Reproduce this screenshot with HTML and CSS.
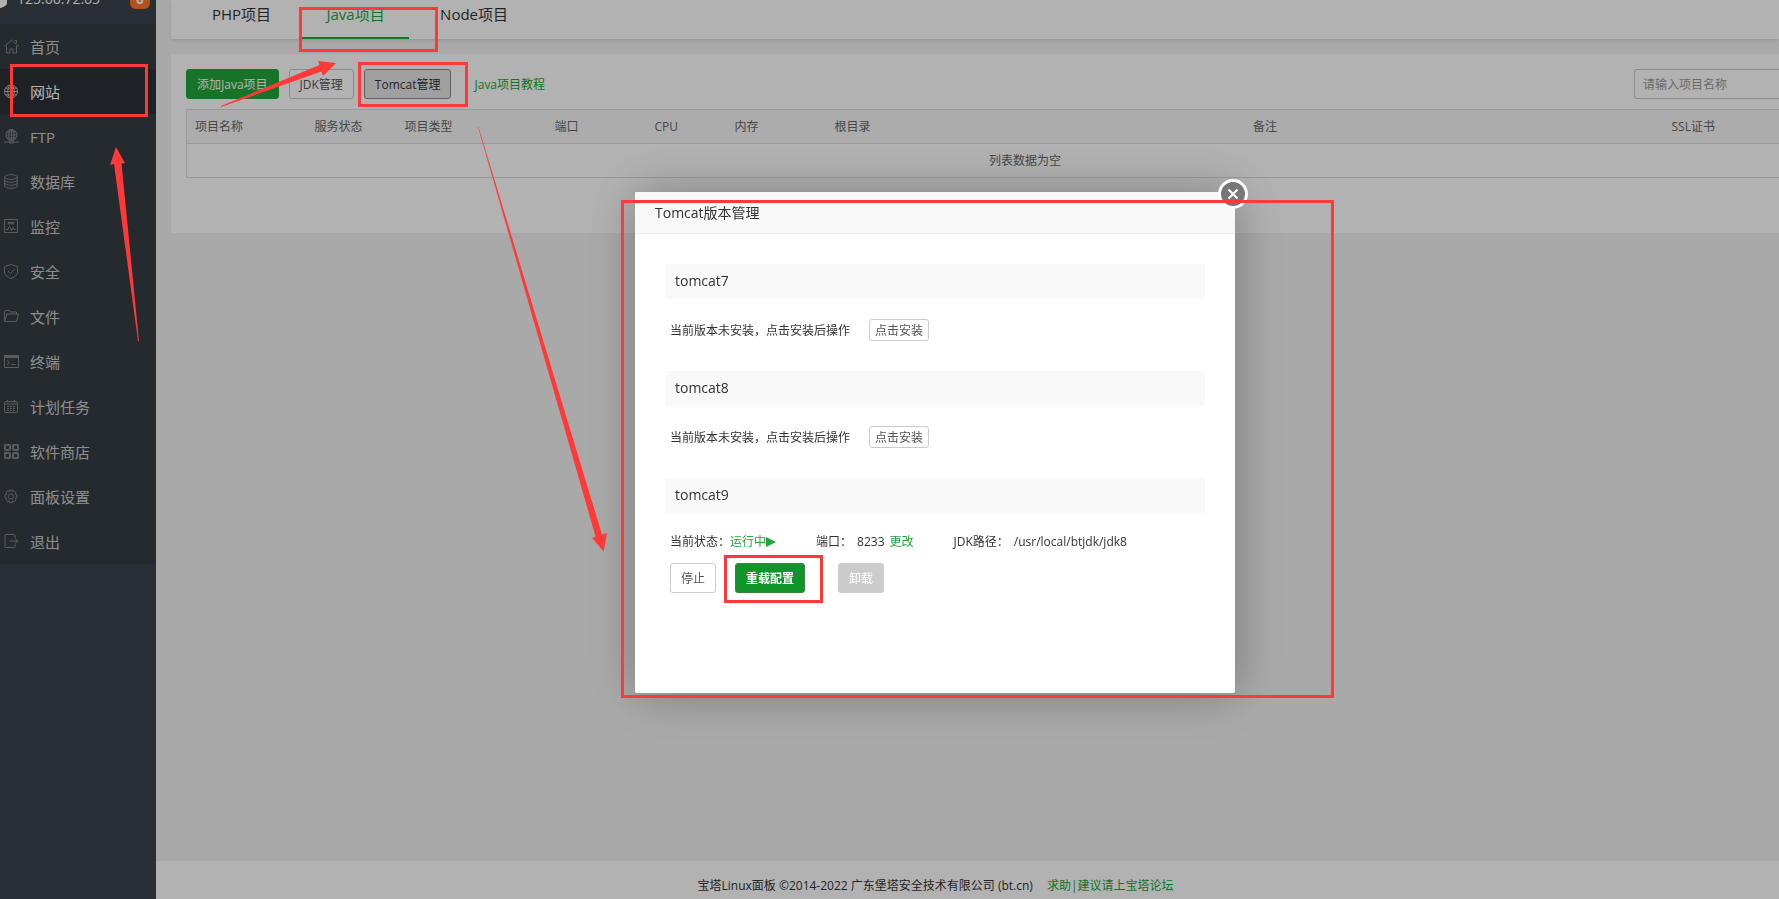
FILE: index.html
```html
<!DOCTYPE html>
<html lang="zh-CN">
<head>
<meta charset="utf-8">
<title>宝塔Linux面板</title>
<link rel="stylesheet" href="styles.css">
</head>
<body>
<div class="app">
  <aside class="sidebar">
    <div class="host">
      <svg class="host-logo" width="14" height="16" viewBox="0 0 14 16"><path d="M0 0H14V11Q14 13 12 14L8 16H6L0 13Z" fill="#fff"/></svg>
      <span class="host-ip">125.66.72.65</span>
      <span class="host-badge">0</span>
    </div>
    <nav class="menu">
      <a class="menu-item" href="#"><svg class="icon" viewBox="0 0 15 15"><path d="M.5 7.500 7.500 1l7 6.500M2.500 7v7h3.500v-4h3v4h3.500V7M10.500 1.500h2v2.500"/></svg>首页</a>
      <a class="menu-item active" href="#"><svg class="icon" viewBox="0 0 15 15"><circle cx="7" cy="7.500" r="6.500"/><ellipse cx="7" cy="7.500" rx="3.200" ry="6.500"/><path d="M7 1v13M.5 7.500h13M1.500 4.200h11M1.500 10.800h11"/></svg>网站</a>
      <a class="menu-item" href="#"><svg class="icon" viewBox="0 0 15 15"><circle cx="7.500" cy="6" r="5.500"/><ellipse cx="7.500" cy="6" rx="2.700" ry="5.500"/><path d="M7.500.5v11M2 6h11M3 3h9M3 9h9M0 13h15M5.500 12v2h4v-2"/></svg>FTP</a>
      <a class="menu-item" href="#"><svg class="icon" viewBox="0 0 15 15"><ellipse cx="7" cy="3" rx="6.300" ry="2.300"/><path d="M.7 3v9c0 3 12.600 3 12.600 0V3M.7 6c0 3 12.600 3 12.600 0M.7 9c0 3 12.600 3 12.600 0"/></svg>数据库</a>
      <a class="menu-item" href="#"><svg class="icon" viewBox="0 0 15 15"><path d="M.5.5h13v13H.500zM4 3.500h6M4 4.800h6M2 10.500h2l1.500-3 2 4 1.500-3 1 2h2"/></svg>监控</a>
      <a class="menu-item" href="#"><svg class="icon" viewBox="0 0 15 15"><path d="M7 .5 13.500 2.500V8c0 3-3 5-6.500 6.500C3.500 13 .5 11 .5 8V2.500zM4 7l2.500 2.500L10.500 5.500"/></svg>安全</a>
      <a class="menu-item" href="#"><svg class="icon" viewBox="0 0 15 15"><path d="M.5 12.500v-10q0-1 1-1h3.500l1.500 1.500h6v2M.5 12.500 3 5h11.500l-2 7.500z"/></svg>文件</a>
      <a class="menu-item" href="#"><svg class="icon" viewBox="0 0 15 15"><path d="M0 2.500h15" stroke-width="3"/><path d="M.5 2v11.500h14V2M3 6.500 5.500 8.500 3 10.500M7.500 10.500h4"/></svg>终端</a>
      <a class="menu-item" href="#"><svg class="icon" viewBox="0 0 15 15"><path d="M1.500 2.500h11q1 0 1 1v9q0 1-1 1h-11q-1 0-1-1v-9q0-1 1-1zM.5 5h13M3.500 1v2.500M10.500 1v2.500"/><path d="M3 7.500h8.500M3 9.500h8.500M3 11.500h8.500" stroke-dasharray="2 1"/></svg>计划任务</a>
      <a class="menu-item" href="#"><svg class="icon bold" viewBox="0 0 15 15"><rect x=".8" y=".8" width="5.200" height="5.200" rx="1.200"/><rect x="9" y=".8" width="5.200" height="5.200" rx="1.200"/><rect x=".8" y="9" width="5.200" height="5.200" rx="1.200"/><rect x="9" y="9" width="5.200" height="5.200" rx="1.200"/></svg>软件商店</a>
      <a class="menu-item" href="#"><svg class="icon" viewBox="0 0 15 15"><circle cx="7" cy="7.500" r="2.600"/><path d="M5.700 1h2.600l.4 1.700 1.500-.9 1.900 1.900-.9 1.500 1.800.9v2.700l-1.800.5.900 1.500-1.900 1.900-1.500-.9-.4 1.900H5.700l-.4-1.900-1.500.9-1.900-1.900.9-1.500L1 8.800V6.100l1.800-.9-.9-1.500 1.900-1.900 1.500.9z"/></svg>面板设置</a>
      <a class="menu-item" href="#"><svg class="icon" viewBox="0 0 15 15"><path d="M11 4V1.500q0-1-1-1H2q-1 0-1 1v11q0 1 1 1h8q1 0 1-1V10M5.500 7h8.500M11 4.500 14 7l-3 2.500"/></svg>退出</a>
    </nav>
  </aside>

  <div class="page">
    <main class="main">
      <nav class="tabs">
        <a class="tab" href="#">PHP项目</a>
        <a class="tab active" href="#">Java项目</a>
        <a class="tab" href="#">Node项目</a>
      </nav>
      <section class="panel">
        <div class="toolbar">
          <button class="btn primary" type="button">添加Java项目</button>
          <button class="btn" type="button">JDK管理</button>
          <button class="btn pressed" type="button">Tomcat管理</button>
          <a class="link help" href="#">Java项目教程</a>
          <input class="search" type="text" aria-label="请输入项目名称" placeholder="请输入项目名称">
        </div>
        <table class="projects">
          <colgroup>
            <col class="w-name"><col class="w-status"><col class="w-type"><col class="w-port"><col class="w-cpu"><col class="w-mem"><col><col><col class="w-ssl">
          </colgroup>
          <thead>
            <tr><th>项目名称</th><th>服务状态</th><th>项目类型</th><th>端口</th><th>CPU</th><th>内存</th><th>根目录</th><th>备注</th><th>SSL证书</th></tr>
          </thead>
          <tbody>
            <tr><td class="empty" colspan="9">列表数据为空</td></tr>
          </tbody>
        </table>
      </section>
    </main>
    <footer class="footer">宝塔Linux面板 ©2014-2022 广东堡塔安全技术有限公司 (bt.cn)<a class="link" href="#">求助|建议请上宝塔论坛</a></footer>
  </div>
</div>

<div class="overlay">
  <div class="dialog" role="dialog" aria-labelledby="dialog-title">
    <h2 class="dialog-title" id="dialog-title">Tomcat版本管理</h2>
    <button class="close" type="button" aria-label="关闭"><svg width="12" height="12" viewBox="0 0 12 12"><path d="M1.500 1.500l9 9M10.500 1.500l-9 9" stroke="#fff" stroke-width="2"/></svg></button>
    <div class="dialog-body">
      <section class="version">
        <h3 class="version-name">tomcat7</h3>
        <div class="install"><span>当前版本未安装，点击安装后操作</span><button class="btn small" type="button">点击安装</button></div>
      </section>
      <section class="version">
        <h3 class="version-name">tomcat8</h3>
        <div class="install"><span>当前版本未安装，点击安装后操作</span><button class="btn small" type="button">点击安装</button></div>
      </section>
      <section class="version">
        <h3 class="version-name">tomcat9</h3>
        <div class="status">
          <span class="state">当前状态：<a class="link running" href="#">运行中<svg width="10" height="10" viewBox="0 0 10 10"><path d="M0 0 10 5 0 10z" fill="#20a53a"/></svg></a></span>
          <span class="port"><span>端口：</span><span>8233</span><a class="link" href="#">更改</a></span>
          <span class="jdk"><span>JDK路径：</span><span>/usr/local/btjdk/jdk8</span></span>
        </div>
        <div class="actions">
          <button class="btn" type="button">停止</button>
          <button class="btn reload" type="button">重载配置</button>
          <button class="btn uninstall" type="button" disabled>卸载</button>
        </div>
      </section>
    </div>
  </div>
</div>

<svg class="marks" width="1779" height="899" viewBox="0 0 1779 899" aria-hidden="true">
  <g fill="none" stroke="#ff3838" stroke-width="3">
    <rect x="11.500" y="65.500" width="135" height="50"/>
    <rect x="300.500" y="8.500" width="136" height="42"/>
    <rect x="359.500" y="63.500" width="107" height="42"/>
    <rect x="622.500" y="201.500" width="710" height="495"/>
    <rect x="725.500" y="556.500" width="96" height="45"/>
  </g>
  <g fill="#ff3838">
    <path d="M116 147 125 163 121.500 163.500 139 341H138L114 164 110 165z"/>
    <path d="M336 63 323 76 321.500 71.500 221 107V106L319.500 65 318 61z"/>
    <path d="M603.700 551.500 592 538 595.500 536.500 478 127H478.500L602 534.500 607 533z"/>
  </g>
</svg>
</body>
</html>
```

FILE: styles.css
```css
* {
  box-sizing: border-box;
}

body {
  margin: 0;
  overflow: hidden;
  color: #333;
  font: 12px/18px "Open Sans", "Noto Sans CJK SC", sans-serif;
}

button,
input {
  font: inherit;
}

a {
  text-decoration: none;
}

.link {
  color: #20a53a;
}

.app {
  display: flex;
  min-height: 100vh;
  background: #f3f3f3;
}

/* Sidebar */
.sidebar {
  flex: 0 0 156px;
  background: #3c444d;
}

.host {
  display: flex;
  align-items: flex-start;
  height: 24px;
  overflow: hidden;
  color: #fff;
  font-size: 14px;
  line-height: 20px;
}

.host-logo {
  flex: none;
  margin: -8px 10px 0 -7px;
}

.host-ip {
  margin-top: -11px;
}

.host-badge {
  width: 20px;
  height: 20px;
  margin: -11px 6px 0 auto;
  border-radius: 6px;
  background: #ff7426;
  font-weight: 700;
  text-align: center;
}

.menu {
  background: #353d44;
}

.menu-item {
  display: flex;
  align-items: center;
  gap: 11px;
  height: 45px;
  padding-left: 4px;
  color: #ccc;
  font-size: 15px;
}

.menu-item.active {
  background: #2c3138;
  color: #fff;
}

.icon {
  width: 15px;
  height: 15px;
  fill: none;
  stroke: #82868a;
  stroke-width: 1;
}

.icon.bold {
  stroke-width: 2;
}

.active .icon {
  stroke: #bbb;
}

/* Page */
.page {
  display: flex;
  flex: 1;
  flex-direction: column;
  min-width: 0;
}

.main {
  flex: 1;
  padding-left: 15px;
}

.tabs {
  display: flex;
  gap: 7px;
  padding-left: 17px;
  background: #fff;
  box-shadow: 0 1px 3px rgba(0, 0, 0, 0.15);
}

.tab {
  min-width: 107px;
  padding: 4px 24px 13px;
  border-bottom: 2px solid transparent;
  color: #333;
  font-size: 15px;
  line-height: 20px;
  text-align: center;
  white-space: nowrap;
}

.tab.active {
  border-color: #20a53a;
  color: #20a53a;
}

.panel {
  margin-top: 15px;
  padding: 15px 0 55px 15px;
  overflow: hidden;
  background: #fff;
}

.toolbar {
  display: flex;
  align-items: center;
  gap: 10px;
  margin-bottom: 10px;
}

.btn {
  height: 30px;
  padding: 2px 10px 0;
  border: 1px solid #ccc;
  border-radius: 3px;
  background: #fff;
  color: #555;
  line-height: 18px;
  white-space: nowrap;
}

.btn.primary {
  border-color: #20a53a;
  background: #20a53a;
  color: #fff;
}

.btn.pressed {
  border-color: #8c8c8c;
  background: #e6e6e6;
  color: #333;
}

.btn.small {
  height: 22px;
  padding: 2px 5px 0;
}

.help {
  margin-left: 13px;
  padding-top: 2px;
}

.search {
  width: 145px;
  height: 30px;
  margin-left: auto;
  padding: 0 8px;
  border: 1px solid #ccc;
  border-right: 0;
  border-radius: 3px 0 0 3px;
  background: #fff;
}

.search::placeholder {
  color: #999;
  opacity: 1;
}

.projects {
  width: calc(100% + 85px);
  border: 1px solid #ddd;
  border-collapse: collapse;
  table-layout: fixed;
}

.projects th,
.projects td {
  height: 34px;
  padding: 0 8px;
  border-bottom: 1px solid #ddd;
  color: #666;
  font-weight: 400;
  text-align: left;
}

.projects th {
  background: #f6f6f6;
}

.projects .empty {
  text-align: center;
}

.w-name {
  width: 120px;
}

.w-status {
  width: 90px;
}

.w-type {
  width: 150px;
}

.w-port,
.w-mem {
  width: 100px;
}

.w-cpu {
  width: 80px;
}

.w-ssl {
  width: 200px;
}

.footer {
  display: flex;
  gap: 14px;
  justify-content: center;
  padding: 16px 64px 4px 0;
  background: #fff;
}

/* Dialog */
.overlay {
  position: fixed;
  inset: 0;
  display: flex;
  align-items: center;
  justify-content: center;
  padding: 0 0 14px 91px;
  background: rgba(0, 0, 0, 0.3);
}

.dialog {
  position: relative;
  width: 600px;
  border-radius: 2px;
  background: #fff;
  box-shadow: 1px 1px 50px rgba(0, 0, 0, 0.3);
}

.dialog-title {
  margin: 0;
  padding: 0 20px;
  border-bottom: 1px solid #eee;
  border-radius: 2px 2px 0 0;
  background: #f8f8f8;
  font-size: 14px;
  font-weight: 400;
  line-height: 41px;
}

.close {
  position: absolute;
  top: -13px;
  right: -13px;
  display: grid;
  width: 30px;
  height: 30px;
  padding: 0;
  place-items: center;
  border: 3px solid #fff;
  border-radius: 50%;
  background: #777;
}

.dialog-body {
  display: grid;
  gap: 30px;
  padding: 30px 30px 100px;
}

.version-name {
  margin: 0 0 20px;
  padding: 0 10px 2px;
  background: #f9f9f9;
  font-size: 14px;
  font-weight: 400;
  line-height: 33px;
}

.install {
  display: flex;
  gap: 19px;
  align-items: center;
  padding-left: 5px;
}

.install span {
  padding-top: 2px;
}

.status {
  display: flex;
  gap: 40px;
  padding: 0 5px 12px;
}

.state,
.running {
  display: inline-flex;
  align-items: center;
}

.port,
.jdk {
  display: flex;
  gap: 5px;
}

.actions {
  display: flex;
  padding-left: 5px;
}

.btn.reload {
  margin: 0 33px 0 19px;
  border-color: #398439;
  background: #10952a;
  color: #fff;
  font-weight: 700;
}

.btn.uninstall {
  background: #ccc;
  color: #fff;
}

/* Hand-drawn marks */
.marks {
  position: fixed;
  top: 0;
  left: 0;
  pointer-events: none;
}
```
